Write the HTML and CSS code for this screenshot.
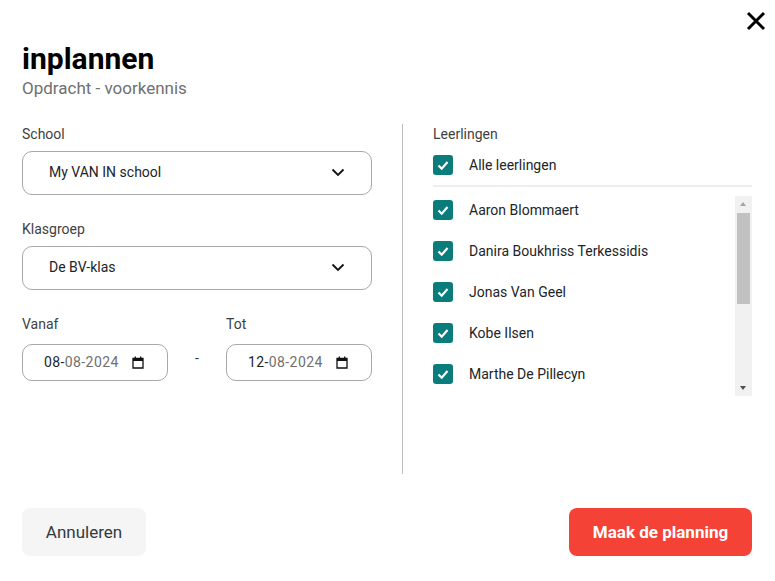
FILE: index.html
```html
<!DOCTYPE html>
<html lang="nl">
<head>
<meta charset="utf-8">
<title>inplannen</title>
<link rel="stylesheet" href="styles.css">
</head>
<body>
<main class="dialog">
  <div class="topbar">
    <svg class="close" viewBox="0 0 20 20" width="20" height="20"><path d="M2 2 18 18M18 2 2 18" fill="none" stroke="#000" stroke-width="3"/></svg>
  </div>
  <header class="head">
    <h1 class="title">inplannen</h1>
    <p class="subtitle">Opdracht - voorkennis</p>
  </header>
  <div class="columns">
    <section class="left">
      <label class="label">School</label>
      <div class="select"><span>My VAN IN school</span>
        <svg class="chev" viewBox="0 0 14 9" width="14" height="9"><path d="M1.5 1.5 7 7l5.500-5.500" fill="none" stroke="#111" stroke-width="1.800"/></svg>
      </div>
      <label class="label label-next">Klasgroep</label>
      <div class="select"><span>De BV-klas</span>
        <svg class="chev" viewBox="0 0 14 9" width="14" height="9"><path d="M1.5 1.5 7 7l5.500-5.500" fill="none" stroke="#111" stroke-width="1.800"/></svg>
      </div>
      <div class="dates">
        <div class="date-field">
          <label class="label">Vanaf</label>
          <div class="date"><span class="date-text"><b>08-</b>08-2024</span>
            <svg class="cal" viewBox="0 0 12 13" width="12" height="13"><path d="M1 2.500h10v9.500H1zM3.300.5v2M8.700.5v2" fill="none" stroke="#111" stroke-width="1.300"/><rect x="1" y="2.500" width="10" height="2.500" fill="#111"/></svg>
          </div>
        </div>
        <span class="dash">-</span>
        <div class="date-field">
          <label class="label">Tot</label>
          <div class="date"><span class="date-text"><b>12-</b>08-2024</span>
            <svg class="cal" viewBox="0 0 12 13" width="12" height="13"><path d="M1 2.500h10v9.500H1zM3.300.5v2M8.700.5v2" fill="none" stroke="#111" stroke-width="1.300"/><rect x="1" y="2.500" width="10" height="2.500" fill="#111"/></svg>
          </div>
        </div>
      </div>
    </section>
    <div class="divider"></div>
    <section class="right">
      <label class="label">Leerlingen</label>
      <div class="row row-all">
        <span class="check"><svg viewBox="0 0 20 20" width="20" height="20"><path d="M5.500 10.500 8.700 13.700 14.500 7" fill="none" stroke="#fff" stroke-width="2.200"/></svg></span>
        <span>Alle leerlingen</span>
      </div>
      <div class="list-wrap">
        <div class="list">
          <div class="row"><span class="check"><svg viewBox="0 0 20 20" width="20" height="20"><path d="M5.500 10.500 8.700 13.700 14.500 7" fill="none" stroke="#fff" stroke-width="2.200"/></svg></span><span>Aaron Blommaert</span></div>
          <div class="row"><span class="check"><svg viewBox="0 0 20 20" width="20" height="20"><path d="M5.500 10.500 8.700 13.700 14.500 7" fill="none" stroke="#fff" stroke-width="2.200"/></svg></span><span>Danira Boukhriss Terkessidis</span></div>
          <div class="row"><span class="check"><svg viewBox="0 0 20 20" width="20" height="20"><path d="M5.500 10.500 8.700 13.700 14.500 7" fill="none" stroke="#fff" stroke-width="2.200"/></svg></span><span>Jonas Van Geel</span></div>
          <div class="row"><span class="check"><svg viewBox="0 0 20 20" width="20" height="20"><path d="M5.500 10.500 8.700 13.700 14.500 7" fill="none" stroke="#fff" stroke-width="2.200"/></svg></span><span>Kobe Ilsen</span></div>
          <div class="row"><span class="check"><svg viewBox="0 0 20 20" width="20" height="20"><path d="M5.500 10.500 8.700 13.700 14.500 7" fill="none" stroke="#fff" stroke-width="2.200"/></svg></span><span>Marthe De Pillecyn</span></div>
        </div>
        <div class="scrollbar">
          <span class="arrow-up"></span>
          <span class="thumb"></span>
          <span class="arrow-down"></span>
        </div>
      </div>
    </section>
  </div>
  <footer class="foot">
    <button class="btn btn-cancel" type="button">Annuleren</button>
    <button class="btn btn-primary" type="button">Maak de planning</button>
  </footer>
</main>
</body>
</html>
```

FILE: styles.css
```css
* { box-sizing: border-box; }
html, body { margin: 0; height: 100%; background: #fff; }
body { font-family: Roboto, "Liberation Sans", sans-serif; color: #212529; overflow: hidden; }
.dialog { width: 775px; height: 581px; padding: 0 23px 25px 22px; display: flex; flex-direction: column; }
.topbar { height: 40px; display: flex; justify-content: flex-end; align-items: flex-start; padding-top: 11px; margin-right: -14px; }
.head { height: 84px; }
.title { margin: 0; font-size: 30px; line-height: 38px; font-weight: 700; color: #000; }
.subtitle { margin: 0; font-size: 17px; line-height: 20px; color: #707070; }
.columns { display: flex; height: 350px; }
.left { width: 350px; }
.divider { width: 1px; margin-left: 30px; background: #bdbdbd; }
.right { width: 319px; margin-left: 30px; }
.label { display: block; font-size: 14px; line-height: 20px; color: #3f3f3f; }
.label-next { margin-top: 24px; }
.select { margin-top: 7px; height: 44px; border: 1px solid #a8a8a8; border-radius: 10px; padding: 0 26px 2px; display: flex; align-items: center; justify-content: space-between; font-size: 14px; color: #212529; }
.chev { display: block; }
.dates { display: flex; margin-top: 24px; }
.date-field { width: 146px; }
.dash { width: 58px; text-align: center; font-size: 14px; padding-top: 34px; color: #343a40; line-height: 20px; }
.date { margin-top: 10px; height: 37px; border: 1px solid #a8a8a8; border-radius: 10px; padding: 0 23px 1px 21px; display: flex; align-items: center; justify-content: space-between; font-size: 14px; color: #707070; letter-spacing: .4px; }
.date b { font-weight: 400; color: #212529; }
.cal { display: block; flex: none; }
.row { display: flex; align-items: center; gap: 16px; height: 41px; font-size: 14px; color: #212529; }
.row-all { height: 42px; margin-top: 1px; border-bottom: 2px solid #eeeeee; }
.check { width: 20px; height: 20px; background: #0a7c7c; border-radius: 3px; display: block; flex: none; }
.check svg { display: block; }
.list-wrap { display: flex; justify-content: space-between; margin-top: 9px; height: 200px; }
.list { flex: 1; margin-top: -7px; }
.scrollbar { width: 17px; background: #f1f1f1; display: flex; flex-direction: column; align-items: center; position: relative; padding-top: 17px; }
.thumb { display: block; width: 13px; height: 91px; background: #c1c1c1; }
.arrow-up, .arrow-down { position: absolute; left: 5px; width: 0; height: 0; border-left: 3.5px solid transparent; border-right: 3.5px solid transparent; }
.arrow-up { top: 6px; border-bottom: 4px solid #a3a3a3; }
.arrow-down { bottom: 6px; border-top: 4px solid #505050; }
.foot { margin-top: auto; display: flex; justify-content: space-between; }
.btn { height: 48px; border: 0; border-radius: 8px; font-family: inherit; font-size: 17px; }
.btn-cancel { width: 124px; background: #f5f5f5; color: #343a40; }
.btn-primary { width: 183px; background: #f44236; color: #fff; font-weight: 700; }
```
